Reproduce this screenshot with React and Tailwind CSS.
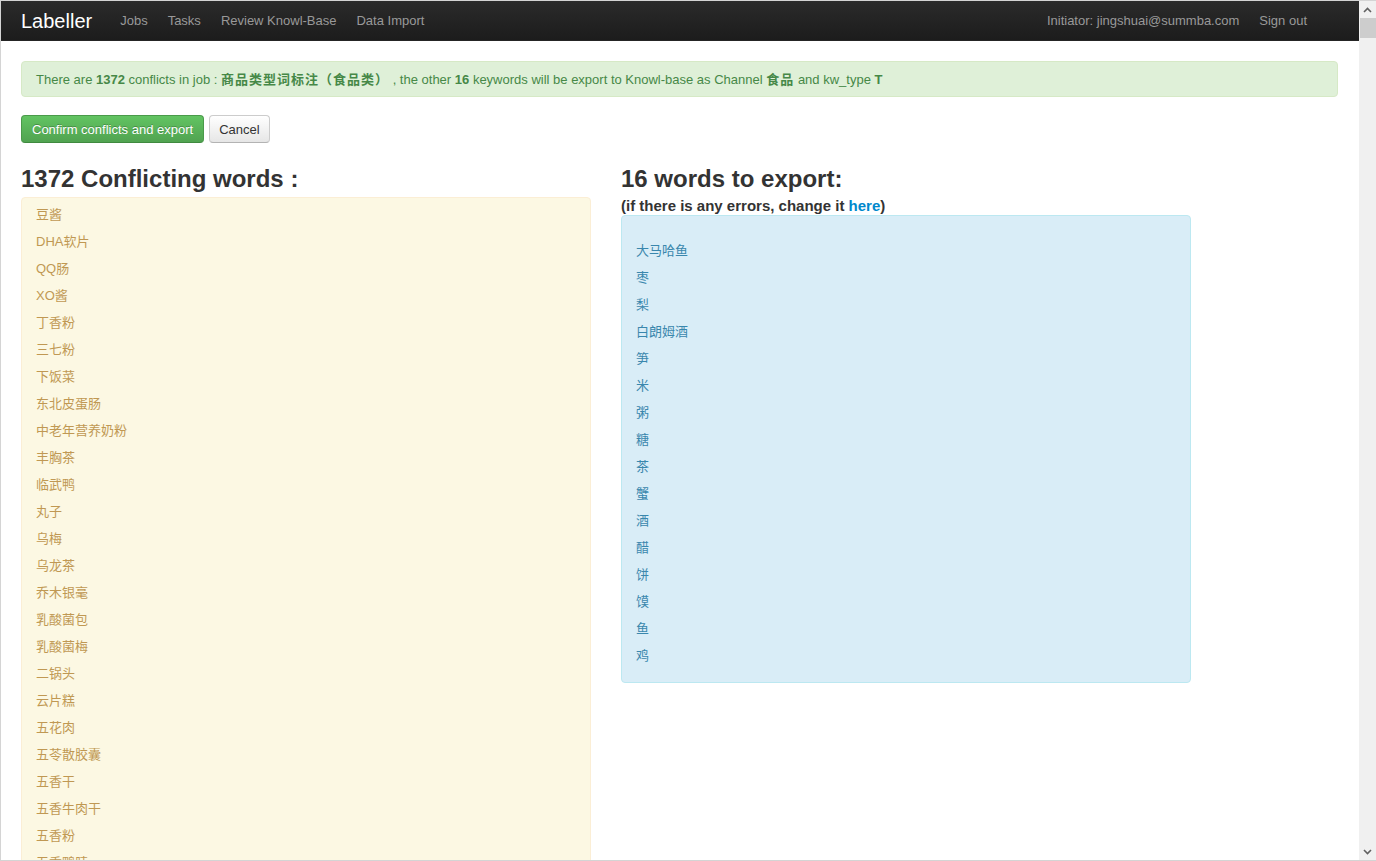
import React from 'react'

const conflicts = [
  '豆酱', 'DHA软片', 'QQ肠', 'XO酱', '丁香粉', '三七粉', '下饭菜', '东北皮蛋肠', '中老年营养奶粉',
  '丰胸茶', '临武鸭', '丸子', '乌梅', '乌龙茶', '乔木银毫', '乳酸菌包', '乳酸菌梅', '二锅头',
  '云片糕', '五花肉', '五苓散胶囊', '五香干', '五香牛肉干', '五香粉', '五香鸭脖', '五香瓜子', '井冈山',
]

const exportWords = ['大马哈鱼', '枣', '梨', '白朗姆酒', '笋', '米', '粥', '糖', '茶', '蟹', '酒', '醋', '饼', '馍', '鱼', '鸡']

function Navbar() {
  return (
    <div className="h-[40px] shrink-0 flex items-center bg-gradient-to-b from-[#2b2b2b] to-[#1c1c1c] border-b border-[#252525] pl-[20px] pr-[42px]">
      <span className="text-white text-[20px] leading-[20px] mr-[18px]">Labeller</span>
      <nav className="flex items-center text-[13px] text-[#999]">
        <a className="px-[10px]">Jobs</a>
        <a className="px-[10px]">Tasks</a>
        <a className="px-[10px]">Review Knowl-Base</a>
        <a className="px-[10px]">Data Import</a>
      </nav>
      <div className="ml-auto flex items-center text-[13px] text-[#999]">
        <span className="px-[10px]">Initiator: jingshuai@summba.com</span>
        <a className="px-[10px]">Sign out</a>
      </div>
    </div>
  )
}

function Scrollbar() {
  return (
    <div className="w-[17px] shrink-0 bg-[#f0f0f0] flex flex-col items-center">
      <div className="h-[17px] flex items-center justify-center">
        <svg width="9" height="6" viewBox="0 0 9 6">
          <path d="M1 5 L4.5 1.5 L8 5" fill="none" stroke="#606060" strokeWidth="1.6" />
        </svg>
      </div>
      <div className="w-[16px] h-[20px] bg-[#cdcdcd]" />
      <div className="flex-1" />
      <div className="h-[17px] flex items-center justify-center">
        <svg width="9" height="6" viewBox="0 0 9 6">
          <path d="M1 1 L4.5 4.5 L8 1" fill="none" stroke="#606060" strokeWidth="1.6" />
        </svg>
      </div>
    </div>
  )
}

export default function App() {
  return (
    <div
      className="w-[1376px] h-[861px] overflow-hidden flex bg-white border-t border-b border-l border-[#d4d4d4]"
      style={{ fontFamily: '"Liberation Sans", Arial, "Noto Sans CJK SC", sans-serif' }}
    >
      <div className="flex-1 flex flex-col overflow-hidden">
        <Navbar />
        <div className="pl-[20px] pr-[21px] pt-[20px]">
          {/* Alert */}
          <div className="bg-[#dff0d8] border border-[#d6e9c6] rounded-[4px] text-[#468847] text-[13px] leading-[18px] pt-[9px] pb-[7px] pl-[14px] pr-[35px]">
            There are <b>1372</b> conflicts in job : <b className="tracking-[1px]">商品类型词标注（食品类）</b> , the other <b>16</b> keywords will be export to Knowl-base as Channel <b className="tracking-[1px]">食品</b> and kw_type <b>T</b>
          </div>

          {/* Buttons */}
          <div className="flex gap-[5px] mt-[18px]">
            <button className="h-[28px] px-[10px] pt-[1px] text-[13px] leading-[18px] text-white rounded-[4px] border border-[#4a9a4a] border-b-[#3f8a3f] bg-gradient-to-b from-[#62c462] to-[#51a351] [text-shadow:0_-1px_0_rgba(0,0,0,0.25)]">
              Confirm conflicts and export
            </button>
            <button className="h-[28px] px-[9px] pt-[1px] text-[13px] leading-[18px] text-[#333] rounded-[4px] border border-[#cccccc] border-b-[#b3b3b3] bg-gradient-to-b from-white to-[#e6e6e6]">
              Cancel
            </button>
          </div>

          {/* Columns */}
          <div className="flex gap-[30px] mt-[22px]">
            <div className="w-[570px] shrink-0">
              <h3 className="text-[24px] leading-[28px] font-bold text-[#333]">1372 Conflicting words :</h3>
              <div className="mt-[4px] bg-[#fcf8e3] border border-[#fbeed5] rounded-[4px] pt-[3px] pl-[14px] text-[13px] text-[#c09853]">
                {conflicts.map((w) => (
                  <div key={w} className="h-[27px] leading-[27px]">{w}</div>
                ))}
              </div>
            </div>
            <div className="w-[570px] shrink-0">
              <h3 className="text-[24px] leading-[28px] font-bold text-[#333]">16 words to export:</h3>
              <div className="mt-[4px] text-[15px] leading-[18px] font-bold text-[#333]">
                (if there is any errors, change it <a className="text-[#0088cc]">here</a>)
              </div>
              <div className="bg-[#d9edf7] border border-[#bce8f1] rounded-[4px] pt-[21px] pb-[13px] pl-[14px] text-[13px] text-[#3a87ad]">
                {exportWords.map((w) => (
                  <div key={w} className="h-[27px] leading-[27px]">{w}</div>
                ))}
              </div>
            </div>
          </div>
        </div>
      </div>
      <Scrollbar />
    </div>
  )
}
